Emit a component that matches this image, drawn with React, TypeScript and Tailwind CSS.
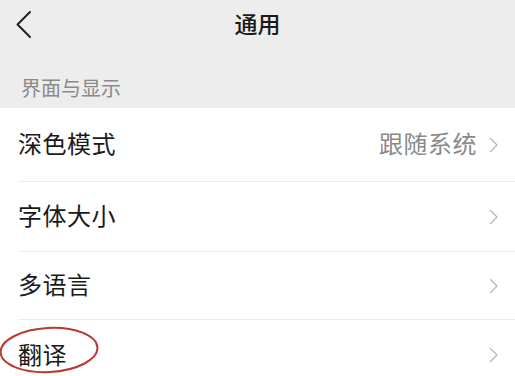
const rows = [
    { label: '深色模式', value: '跟随系统', h: 'h-[74px]' },
    { label: '字体大小', value: '', h: 'h-[70px]' },
    { label: '多语言', value: '', h: 'h-[68px]' },
    { label: '翻译', value: '', h: 'h-[70px]', circled: true },
]

function Chevron() {
    return (
        <svg width="10" height="16" viewBox="0 0 10 16" className="shrink-0">
            <path d="M1.5 1.5 L8 8 L1.5 14.5" fill="none" stroke="#b8b8b8" strokeWidth="1.4" strokeLinecap="round" strokeLinejoin="round" />
        </svg>
    )
}

export default function App() {
    return (
        <div
            className="w-[515px] h-[376px] overflow-hidden bg-[#ededed]"
            style={{ fontFamily: '"Noto Sans CJK SC", "Noto Sans", sans-serif' }}
        >
            {/* Nav bar */}
            <div className="relative h-[46px] flex items-center justify-center">
                <svg className="absolute left-[15px] top-[10px]" width="18" height="29" viewBox="0 0 18 29">
                    <path d="M15 2 L2.5 14.5 L15 27" fill="none" stroke="#222" strokeWidth="2" strokeLinecap="round" strokeLinejoin="round" />
                </svg>
                <h1 className="text-[23px] font-medium text-[#1a1a1a] leading-none">通用</h1>
            </div>

            {/* Section label */}
            <div className="h-[62px] flex items-end pl-[21px] pb-[10px]">
                <span className="text-[20px] leading-[20px] text-[#8a8a8a]">界面与显示</span>
            </div>

            {/* List */}
            <div className="bg-white">
                {rows.map((row, i) => (
                    <div key={row.label} className={`relative ${row.h} pl-[18px]`}>
                        <div
                            className={`h-full flex items-center pr-[16px] ${
                                i < rows.length - 1 ? 'border-b border-[#ececec]' : ''
                            }`}
                        >
                            <span className="flex-1 pb-[3px] text-[24px] leading-none text-[#1a1a1a] tracking-[0.5px]">
                                {row.label}
                            </span>
                            {row.value && (
                                <span className="mr-[12px] pb-[3px] text-[24px] leading-none text-[#8a8a8a] tracking-[0.5px]">
                                    {row.value}
                                </span>
                            )}
                            <Chevron />
                        </div>
                        {row.circled && (
                            <svg
                                className="absolute left-[-2px] top-[5px]"
                                width="104"
                                height="50"
                                viewBox="0 0 104 50"
                            >
                                <ellipse
                                    cx="51"
                                    cy="25"
                                    rx="48.5"
                                    ry="22"
                                    fill="none"
                                    stroke="#b83a30"
                                    strokeWidth="2"
                                    transform="rotate(-3 51 25)"
                                />
                            </svg>
                        )}
                    </div>
                ))}
            </div>
        </div>
    )
}
